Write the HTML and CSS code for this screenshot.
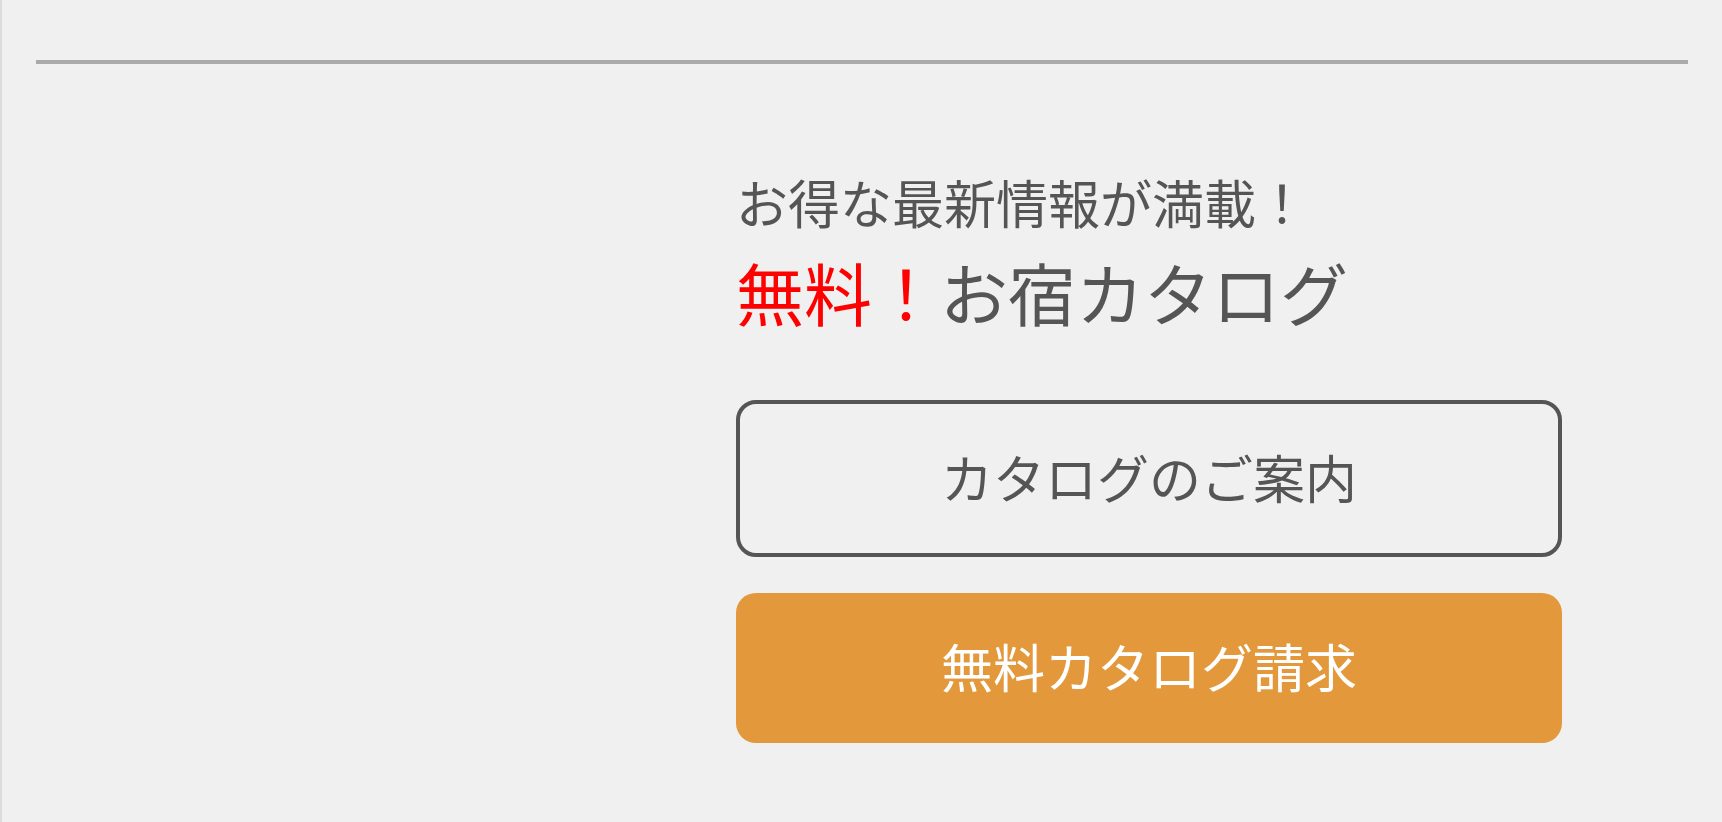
FILE: index.html
```html
<!DOCTYPE html>
<html lang="ja">
<head>
  <meta charset="UTF-8">
  <meta name="viewport" content="width=device-width, initial-scale=1.0">
  <title>お宿カタログ</title>
  <link rel="stylesheet" href="styles.css">
</head>
<body>
  <div class="page">
    <hr class="divider">

    <div class="catalog">
      <div class="catalog-side"></div>
      <div class="catalog-main">
        <p class="lead">お得な最新情報が満載！</p>
        <h2 class="title"><span class="free">無料！</span>お宿カタログ</h2>

        <a class="btn btn-outline" href="#">カタログのご案内</a>
        <a class="btn btn-order" href="#">無料カタログ請求</a>
      </div>
    </div>
  </div>
</body>
</html>
```

FILE: styles.css
```css
html, body {
  height: 100%;
}
body {
  margin: 0;
  background: #f0f0f0;
  border-left: 2px solid #dcdcdc;
  font-family: "Noto Sans CJK JP", "Noto Sans", sans-serif;
  color: #555;
}
.page {
  padding: 0 34px 0 34px;
}
.divider {
  margin: 60px 0 0;
  border: none;
  border-top: 4px solid #aaa;
  height: 0;
}
.catalog {
  display: grid;
  grid-template-columns: 700px 826px;
  padding-top: 112px;
}
.catalog-main {
  display: flex;
  flex-direction: column;
}
.lead {
  margin: 0;
  font-size: 52px;
  line-height: 1;
}
.title {
  margin: 30px 0 0;
  font-size: 68px;
  font-weight: normal;
  line-height: 1;
}
.free {
  color: #ff0000;
}
.btn {
  display: flex;
  align-items: center;
  justify-content: center;
  padding-bottom: 5px;
  font-size: 52px;
  text-decoration: none;
  border-radius: 20px;
  box-sizing: border-box;
}
.btn-outline {
  margin-top: 74px;
  height: 157px;
  border: 4px solid #555;
  color: #555;
}
.btn-order {
  margin-top: 36px;
  height: 150px;
  background: #e2983b;
  color: #fff;
}
```
